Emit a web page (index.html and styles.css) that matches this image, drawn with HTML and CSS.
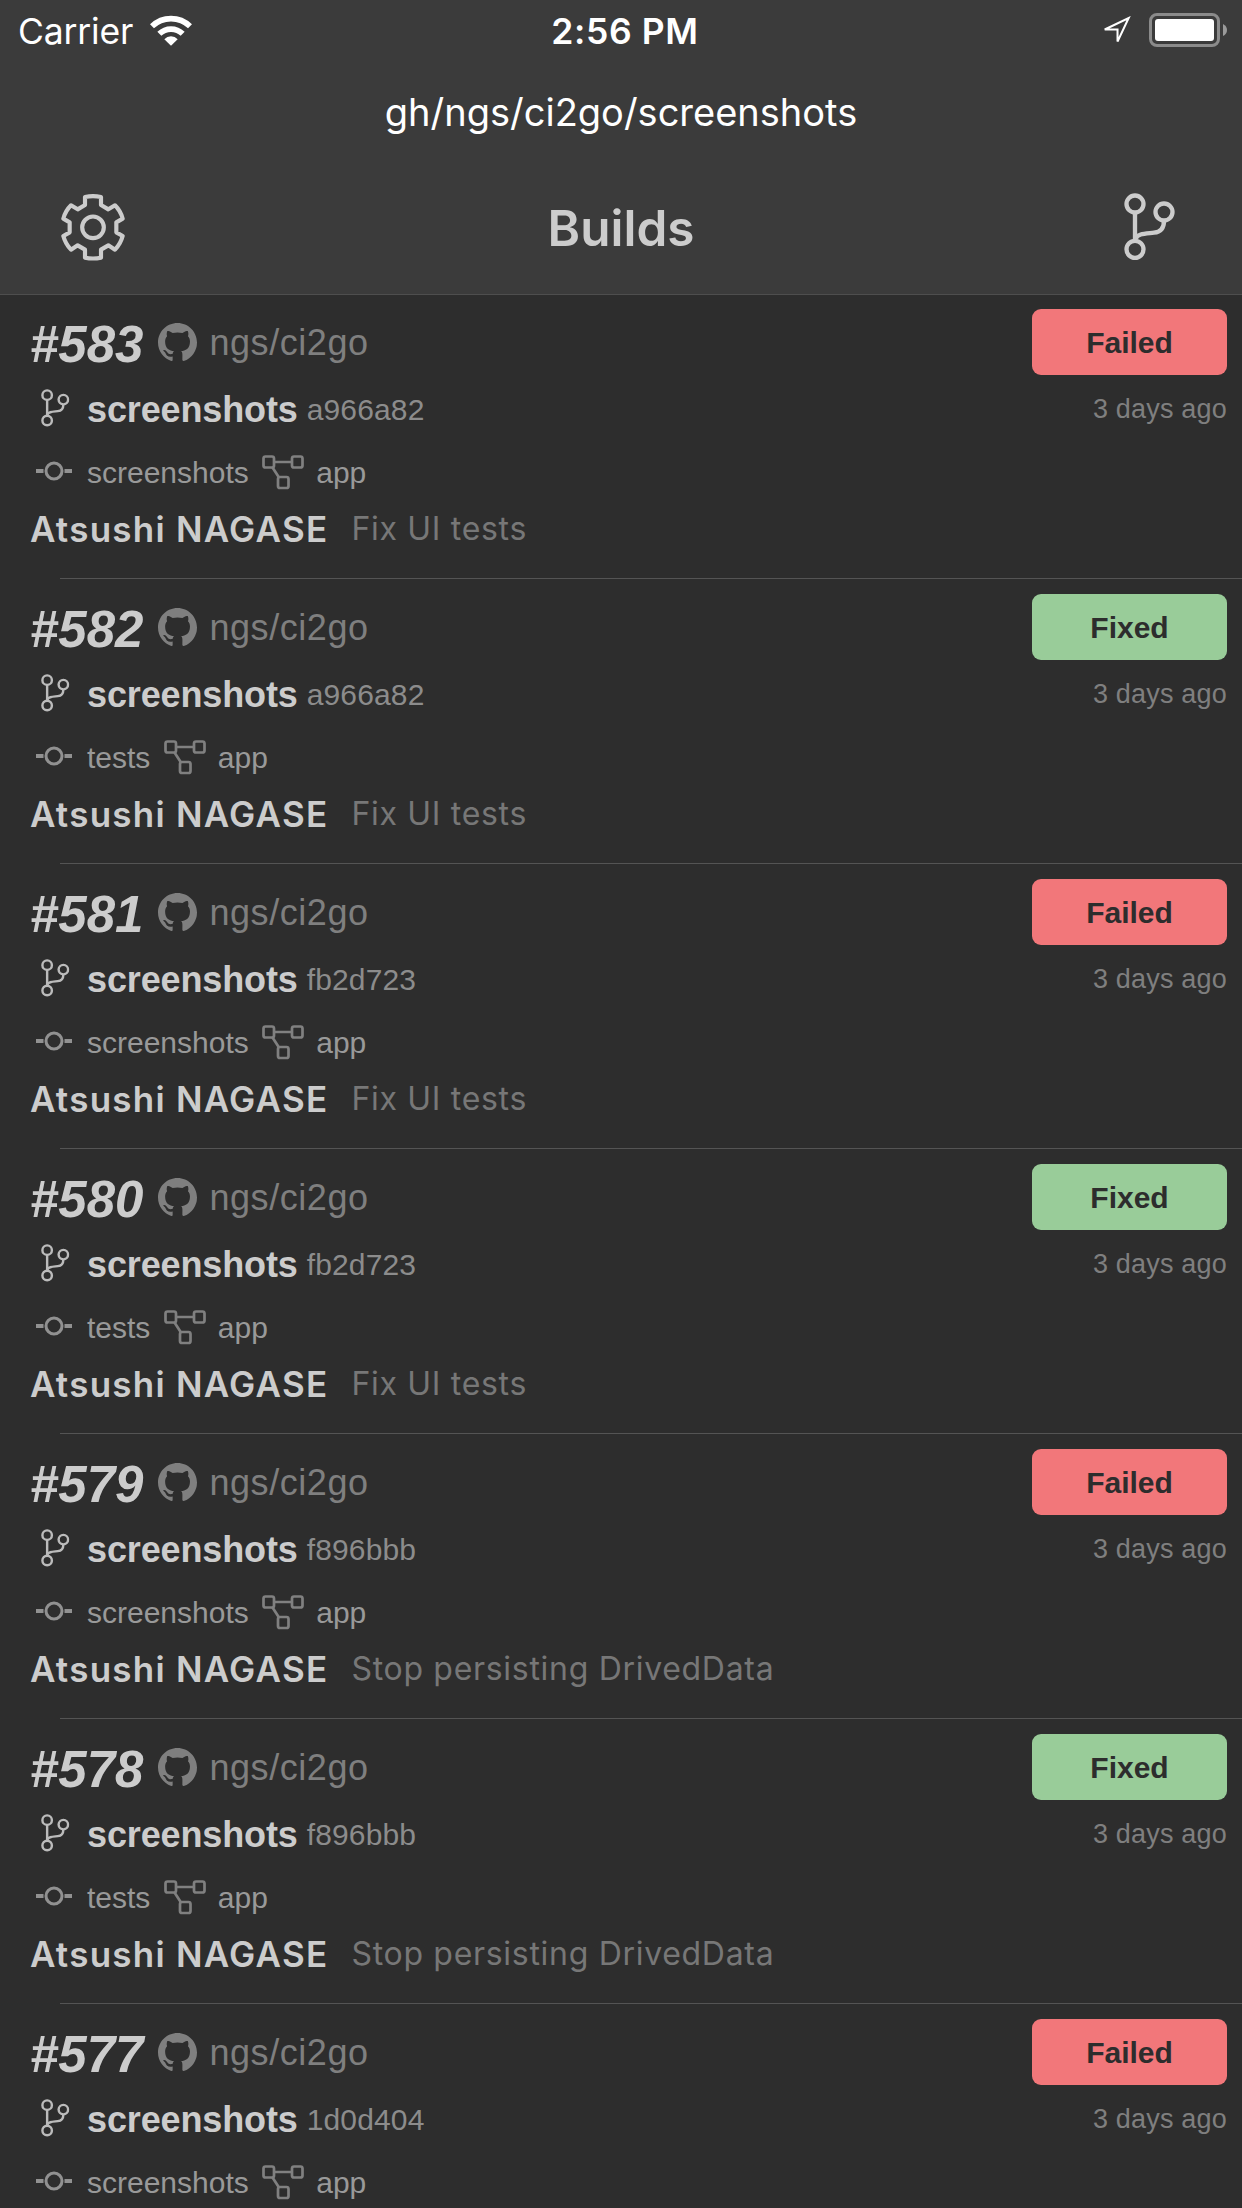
FILE: index.html
```html
<!DOCTYPE html>
<html lang="en">
<head>
<meta charset="utf-8">
<title>Builds</title>
<link rel="stylesheet" href="styles.css">
</head>
<body>
<svg class="sprite" aria-hidden="true">
  <symbol id="branch" viewBox="373 580 153 204"><g fill="none" stroke="currentColor" stroke-width="13"><circle cx="406" cy="613" r="25.500"/><circle cx="493" cy="637" r="25.500"/><circle cx="406" cy="749" r="25.500"/><path d="M406 638V724M493 663C493 688 481 697 463 699C437 702 413 701 408 718"/></g></symbol>
  <symbol id="github" viewBox="0 0 16 16"><path fill="currentColor" fill-rule="evenodd" d="M8 0C3.58 0 0 3.58 0 8c0 3.54 2.29 6.53 5.47 7.59.4.07.55-.17.55-.38 0-.19-.01-.82-.01-1.49-2.01.37-2.53-.49-2.69-.94-.09-.23-.48-.94-.82-1.13-.28-.15-.68-.52-.01-.53.63-.01 1.08.58 1.23.82.72 1.21 1.87.87 2.33.66.07-.52.28-.87.51-1.07-1.78-.2-3.64-.89-3.64-3.95 0-.87.31-1.59.82-2.15-.08-.2-.36-1.02.08-2.12 0 0 .67-.21 2.2.82.64-.18 1.32-.27 2-.27s1.36.09 2 .27c1.53-1.04 2.2-.82 2.2-.82.44 1.1.16 1.92.08 2.12.51.56.82 1.27.82 2.15 0 3.07-1.87 3.75-3.65 3.95.29.25.54.73.54 1.48 0 1.07-.01 1.93-.01 2.2 0 .21.15.46.55.38A8.01 8.01 0 0 0 16 8c0-4.42-3.58-8-8-8z"/></symbol>
  <symbol id="commit" viewBox="0 0 36 20"><g fill="none" stroke="currentColor" stroke-width="3"><circle cx="18" cy="10" r="8"/><path stroke-width="4" d="M0 10H7.500M28.500 10H36"/></g></symbol>
  <symbol id="flow" viewBox="0 0 42 35"><g fill="none" stroke="currentColor" stroke-width="2.700"><rect x="1.500" y="1.500" width="10.500" height="11" rx="2"/><rect x="30" y="1.500" width="10.500" height="11" rx="2"/><rect x="16" y="22" width="10.500" height="11" rx="2"/><path d="M12 7H30M10.500 12.500L17 22.500"/></g></symbol>
</svg>
<header class="header">
  <div class="status">
    <div class="status-left">
      <span class="carrier">Carrier</span>
      <svg class="wifi" viewBox="450 44 126 92"><g fill="none" stroke="#fff"><path stroke-width="17" d="M456 77.500A82 82 0 0 1 570 77.500"/><path stroke-width="17" d="M478 100A50 50 0 0 1 548 100"/></g><path fill="#fff" d="M493 116A28 28 0 0 1 533 116L513 136Z"/></svg>
    </div>
    <span class="clock">2:56 PM</span>
    <div class="status-right">
      <svg class="location" viewBox="303 47 92 92"><path fill="none" stroke="#fff" stroke-width="6" d="M388 53L355 123V87L317 87Z"/></svg>
      <svg class="battery" viewBox="0 0 78 34"><rect x="1.500" y="1.500" width="68" height="31" rx="6.500" fill="none" stroke="#8b8b8b" stroke-width="3"/><rect x="6" y="6" width="59" height="22" rx="3" fill="#fff"/><path fill="#9a9a9a" d="M74 11Q78 13 78 17T74 23Z"/></svg>
    </div>
  </div>
  <div class="path"><span class="path-text">gh/ngs/ci2go/screenshots</span></div>
  <nav class="nav">
    <svg class="gear" viewBox="183 581 192 201"><g fill="none" stroke="currentColor" stroke-width="12.500" stroke-linejoin="round"><path d="M255 590Q279 585 303 590V614L325 627L345 615Q362 632 368 655L349 666V696L368 707Q362 730 345 748L325 735L303 748V772Q279 777 255 772V748L233 735L213 748Q196 730 190 707L209 696V666L190 655Q196 632 213 615L233 627L255 614Z"/><circle cx="279" cy="681" r="32.500"/></g></svg>
    <h1 class="title">Builds</h1>
    <svg class="nav-branch"><use href="#branch"/></svg>
  </nav>
</header>
<main class="list">
  <article class="build">
    <div class="info">
      <div class="line line-repo"><span class="num">#583</span><svg class="i-github"><use href="#github"/></svg><span class="repo">ngs/ci2go</span></div>
      <div class="line line-branch"><svg class="i-branch"><use href="#branch"/></svg><b class="branch">screenshots</b><span class="sha">a966a82</span></div>
      <div class="line line-job"><svg class="i-commit"><use href="#commit"/></svg><span class="job">screenshots</span><svg class="i-flow"><use href="#flow"/></svg><span class="job">app</span></div>
      <div class="line line-author"><b class="author">Atsushi NAGASE</b><span class="message">Fix UI tests</span></div>
    </div>
    <div class="side"><span class="badge failed">Failed</span><time class="time">3 days ago</time></div>
  </article>
  <article class="build">
    <div class="info">
      <div class="line line-repo"><span class="num">#582</span><svg class="i-github"><use href="#github"/></svg><span class="repo">ngs/ci2go</span></div>
      <div class="line line-branch"><svg class="i-branch"><use href="#branch"/></svg><b class="branch">screenshots</b><span class="sha">a966a82</span></div>
      <div class="line line-job"><svg class="i-commit"><use href="#commit"/></svg><span class="job">tests</span><svg class="i-flow"><use href="#flow"/></svg><span class="job">app</span></div>
      <div class="line line-author"><b class="author">Atsushi NAGASE</b><span class="message">Fix UI tests</span></div>
    </div>
    <div class="side"><span class="badge fixed">Fixed</span><time class="time">3 days ago</time></div>
  </article>
  <article class="build">
    <div class="info">
      <div class="line line-repo"><span class="num">#581</span><svg class="i-github"><use href="#github"/></svg><span class="repo">ngs/ci2go</span></div>
      <div class="line line-branch"><svg class="i-branch"><use href="#branch"/></svg><b class="branch">screenshots</b><span class="sha">fb2d723</span></div>
      <div class="line line-job"><svg class="i-commit"><use href="#commit"/></svg><span class="job">screenshots</span><svg class="i-flow"><use href="#flow"/></svg><span class="job">app</span></div>
      <div class="line line-author"><b class="author">Atsushi NAGASE</b><span class="message">Fix UI tests</span></div>
    </div>
    <div class="side"><span class="badge failed">Failed</span><time class="time">3 days ago</time></div>
  </article>
  <article class="build">
    <div class="info">
      <div class="line line-repo"><span class="num">#580</span><svg class="i-github"><use href="#github"/></svg><span class="repo">ngs/ci2go</span></div>
      <div class="line line-branch"><svg class="i-branch"><use href="#branch"/></svg><b class="branch">screenshots</b><span class="sha">fb2d723</span></div>
      <div class="line line-job"><svg class="i-commit"><use href="#commit"/></svg><span class="job">tests</span><svg class="i-flow"><use href="#flow"/></svg><span class="job">app</span></div>
      <div class="line line-author"><b class="author">Atsushi NAGASE</b><span class="message">Fix UI tests</span></div>
    </div>
    <div class="side"><span class="badge fixed">Fixed</span><time class="time">3 days ago</time></div>
  </article>
  <article class="build">
    <div class="info">
      <div class="line line-repo"><span class="num">#579</span><svg class="i-github"><use href="#github"/></svg><span class="repo">ngs/ci2go</span></div>
      <div class="line line-branch"><svg class="i-branch"><use href="#branch"/></svg><b class="branch">screenshots</b><span class="sha">f896bbb</span></div>
      <div class="line line-job"><svg class="i-commit"><use href="#commit"/></svg><span class="job">screenshots</span><svg class="i-flow"><use href="#flow"/></svg><span class="job">app</span></div>
      <div class="line line-author"><b class="author">Atsushi NAGASE</b><span class="message">Stop persisting DrivedData</span></div>
    </div>
    <div class="side"><span class="badge failed">Failed</span><time class="time">3 days ago</time></div>
  </article>
  <article class="build">
    <div class="info">
      <div class="line line-repo"><span class="num">#578</span><svg class="i-github"><use href="#github"/></svg><span class="repo">ngs/ci2go</span></div>
      <div class="line line-branch"><svg class="i-branch"><use href="#branch"/></svg><b class="branch">screenshots</b><span class="sha">f896bbb</span></div>
      <div class="line line-job"><svg class="i-commit"><use href="#commit"/></svg><span class="job">tests</span><svg class="i-flow"><use href="#flow"/></svg><span class="job">app</span></div>
      <div class="line line-author"><b class="author">Atsushi NAGASE</b><span class="message">Stop persisting DrivedData</span></div>
    </div>
    <div class="side"><span class="badge fixed">Fixed</span><time class="time">3 days ago</time></div>
  </article>
  <article class="build">
    <div class="info">
      <div class="line line-repo"><span class="num">#577</span><svg class="i-github"><use href="#github"/></svg><span class="repo">ngs/ci2go</span></div>
      <div class="line line-branch"><svg class="i-branch"><use href="#branch"/></svg><b class="branch">screenshots</b><span class="sha">1d0d404</span></div>
      <div class="line line-job"><svg class="i-commit"><use href="#commit"/></svg><span class="job">screenshots</span><svg class="i-flow"><use href="#flow"/></svg><span class="job">app</span></div>
    </div>
    <div class="side"><span class="badge failed">Failed</span><time class="time">3 days ago</time></div>
  </article>
</main>
</body>
</html>
```
FILE: styles.css
```css
* { box-sizing: border-box; }
html, body { margin: 0; height: 2208px; overflow: hidden; }
body { background: #2d2d2d; color: #ccc; font-family: "Liberation Sans", Arial, sans-serif; display: flex; flex-direction: column; }
svg { display: block; flex: none; }
.sprite { display: none; }

.header { flex: none; height: 294px; background: #3b3b3b; box-shadow: 0 1px #4e4e4e; color: #fff; font-family: Inter, sans-serif; }
.status { height: 62px; display: grid; grid-template-columns: 1fr auto 1fr; align-items: center; padding: 0 15px 0 18px; font-size: 35.500px; white-space: nowrap; }
.status-left, .status-right { display: flex; align-items: center; }
.status-left { gap: 17px; }
.status-right { justify-content: flex-end; gap: 18px; }
.carrier { letter-spacing: -0.15px; }
.wifi { width: 42px; height: 31px; margin-top: -2px; }
.clock { font-weight: 600; letter-spacing: 0.600px; padding-left: 5px; }
.location { width: 31px; height: 31px; }
.battery { width: 78px; height: 34px; margin-top: -2px; }
.path { height: 100px; display: flex; justify-content: center; align-items: center; font-size: 38px; line-height: 100px; }
.nav { height: 132px; display: flex; align-items: center; justify-content: space-between; padding: 0 67px 0 61px; color: #ccc; }
.gear { width: 64px; height: 67px; margin-top: -2px; }
.title { margin: 0 7px 0 0; font-size: 49.500px; font-weight: 600; }
.nav-branch { width: 51px; height: 68px; margin-top: -2px; }

.build { position: relative; height: 285px; padding: 15px 15px 0 30px; display: flex; justify-content: space-between; }
.build::after { content: ""; position: absolute; left: 60px; right: 0; bottom: 0; height: 1px; background: #545454; }
.list { flex: none; height: 1914px; overflow: hidden; }
.line { display: flex; align-items: center; white-space: nowrap; }
.line-repo { height: 66px; }
.line-branch { height: 69px; }
.line-job { height: 57px; color: #999; }
.line-author { height: 55px; font-family: Inter, sans-serif; }
.num { font-size: 51px; font-weight: 700; font-style: italic; padding-top: 4px; }
.i-github { width: 39px; height: 39px; margin: 0 12px 0 15px; color: #7f7f7f; }
.repo { font-size: 36px; color: #7f7f7f; letter-spacing: 0.550px; padding-top: 2px; }
.i-branch { width: 28.500px; height: 38px; margin: -3px 17.500px 0 11px; color: #bbb; }
.branch { font-size: 36px; letter-spacing: -0.130px; }
.sha { font-size: 30px; color: #8c8c8c; margin-left: 9px; letter-spacing: 0.150px; }
.i-commit { width: 36px; height: 20px; margin: -3px 15px 0 6px; color: #919191; }
.job { font-size: 30px; }
.i-flow { width: 42px; height: 35px; margin: 0 12px 0 13.500px; color: #808080; }
.author { font-size: 35px; font-weight: 600; letter-spacing: 1.250px; }
.message { font-size: 32px; color: #777; margin-left: 23px; letter-spacing: 0.700px; }
.side { width: 195px; display: flex; flex-direction: column; }
.badge { height: 66px; border-radius: 9px; color: #2d2d2d; font-size: 30px; font-weight: 700; line-height: 67px; text-align: center; }
.failed { background: #f2777a; }
.fixed { background: #9c9; }
.time { height: 69px; line-height: 69px; font-size: 27px; color: #7f7f7f; letter-spacing: 0.200px; text-align: right; white-space: nowrap; }
```
